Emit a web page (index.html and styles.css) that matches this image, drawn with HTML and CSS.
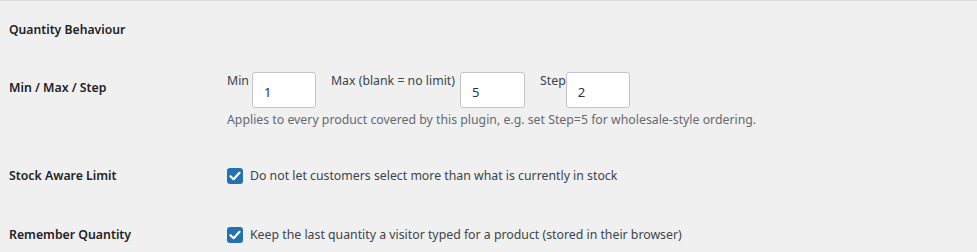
FILE: index.html
```html
<!DOCTYPE html>
<html>
<head>
    <meta charset="utf-8">
    <title>Quantity Settings</title>
    <link rel="stylesheet" href="styles.css">
</head>
<body>
    <div class="wrap">
        <h2 class="section">Quantity Behaviour</h2>
        <div class="row row-minmax">
            <div class="th">Min / Max / Step</div>
            <div class="td">
                <div class="fields">
                    <label class="lbl">Min</label>
                    <input class="numin" type="text" value="1">
                    <label class="lbl gap lbl-max">Max (blank = no limit)</label>
                    <input class="numin numin-wide" type="text" value="5">
                    <label class="lbl gap lbl-step">Step</label>
                    <input class="numin" type="text" value="2">
                </div>
                <p class="desc">Applies to every product covered by this plugin, e.g. set Step=5 for wholesale-style ordering.</p>
            </div>
        </div>
        <div class="row row-stock">
            <div class="th">Stock Aware Limit</div>
            <div class="td">
                <label class="check"><span class="box"><svg width="12" height="10" viewBox="0 0 12 10"><path d="M1.5 5.2 L4.6 8.2 L10.5 1.8" fill="none" stroke="#fff" stroke-width="2.2" stroke-linecap="round" stroke-linejoin="round"/></svg></span>Do not let customers select more than what is currently in stock</label>
            </div>
        </div>
        <div class="row row-remember">
            <div class="th">Remember Quantity</div>
            <div class="td">
                <label class="check"><span class="box"><svg width="12" height="10" viewBox="0 0 12 10"><path d="M1.5 5.2 L4.6 8.2 L10.5 1.8" fill="none" stroke="#fff" stroke-width="2.2" stroke-linecap="round" stroke-linejoin="round"/></svg></span>Keep the last quantity a visitor typed for a product (stored in their browser)</label>
            </div>
        </div>
    </div>
</body>
</html>
```

FILE: styles.css
```css
html, body {
    margin: 0;
    padding: 0;
    background: #f0f0f1;
}
body {
    font-family: "Noto Sans", "Open Sans", sans-serif;
    font-size: 12.3px;
    line-height: 18px;
    color: #3c434a;
    border-top: 1px solid #dcdcde;
}
.wrap {
    padding: 0 9px;
}
.section {
    margin: 0;
    padding-top: 20px;
    height: 59px;
    box-sizing: border-box;
    font-size: 12.2px;
    font-weight: 600;
    color: #1d2327;
}
.row {
    display: flex;
}
.th {
    width: 218px;
    flex: none;
    font-weight: 600;
    color: #1d2327;
}
.row-minmax {
    padding-top: 12px;
}
.row-minmax .th {
    padding-top: 7px;
}
.fields {
    display: flex;
    align-items: flex-start;
}
.lbl {
    margin-right: 3px;
}
.lbl.gap {
    margin-left: 15px;
}
.lbl-max {
    margin-right: 5px;
}
.lbl-step {
    margin-left: 14px;
    margin-right: 0;
}
.numin {
    width: 64px;
    height: 36px;
    box-sizing: border-box;
    margin: 0;
    padding: 4px 11px 0;
    border: 1px solid #c3c4c7;
    border-radius: 3px;
    background: #fff;
    font: inherit;
    font-size: 13px;
    color: #2c3338;
}
.numin-wide {
    width: 65px;
}
.desc {
    margin: 3px 0 0;
    color: #646970;
}
.row-stock {
    padding-top: 38px;
}
.row-remember {
    padding-top: 41px;
}
.check {
    display: flex;
    align-items: center;
}
.box {
    width: 16px;
    height: 16px;
    box-sizing: border-box;
    border-radius: 3px;
    background: #2271b1;
    display: flex;
    align-items: center;
    justify-content: center;
    margin-right: 7px;
}
```
